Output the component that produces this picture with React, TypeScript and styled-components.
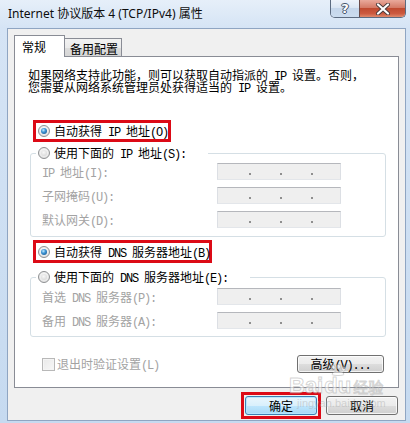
import React from "react";
import styled, { createGlobalStyle } from "styled-components";

const CJK = `"Noto Sans CJK SC", "Noto Sans", sans-serif`;
const RED = "#dc0a16";

const GlobalStyle = createGlobalStyle`
  html, body { margin: 0; padding: 0; }
  body { width: 410px; height: 423px; overflow: hidden; background: #c9dcf1; }
  * { box-sizing: border-box; }
`;

const Window = styled.div`
  position: relative;
  width: 410px;
  height: 423px;
  display: flex;
  flex-direction: column;
  background: linear-gradient(to bottom, #e6eff9 0px, #d5e4f5 28px, #c6daf0 100%);
  font-family: ${CJK};
  font-size: 12px;
  color: #000;
`;

const TitleBar = styled.div`
  height: 28px;
  flex: none;
  display: flex;
  align-items: flex-start;
  padding-left: 8px;
`;

const Title = styled.div`
  padding-top: 6px;
  line-height: 16px;
  font-family: "Noto Sans", "Noto Sans CJK SC", sans-serif;
  font-size: 12px;
  color: #0d0d0d;
`;

const CaptionGroup = styled.div`
  margin-left: auto;
  margin-right: 4px;
  display: flex;
  height: 18px;
  border: 1px solid #5c6b80;
  border-top: none;
  border-radius: 0 0 5px 5px;
  overflow: hidden;
`;

const CaptionButton = styled.div<{ $close?: boolean }>`
  width: ${(p) => (p.$close ? 46 : 28)}px;
  display: flex;
  align-items: center;
  justify-content: center;
  border-left: ${(p) => (p.$close ? "1px solid #6a4a48" : "none")};
  background: ${(p) =>
    p.$close
      ? "linear-gradient(to bottom, #e9a99b 0%, #d47a66 45%, #c04a30 50%, #cc5a3f 80%, #e08a6c 100%)"
      : "linear-gradient(to bottom, #eef3fa 0%, #dbe6f3 45%, #c5d6ea 50%, #cbdcef 100%)"};
  color: #fff;
  font-family: "DejaVu Sans", sans-serif;
  font-weight: bold;
  font-size: 13px;
  line-height: 1;
  text-shadow: 0 0 1px #33435a, 1px 0 0 #4a5a70, -1px 0 0 #4a5a70, 0 1px 0 #4a5a70, 0 -1px 0 #4a5a70;
`;

const Client = styled.div`
  flex: 1;
  margin: 0 4px 2px 7px;
  background: #f0f0f0;
  border: 1px solid #8fa5c2;
  display: flex;
  flex-direction: column;
  padding: 6px 6px 0 6px;
`;

const TabStrip = styled.div`
  height: 21px;
  flex: none;
  display: flex;
  align-items: flex-end;
`;

const Tab = styled.div<{ $active?: boolean }>`
  position: relative;
  z-index: ${(p) => (p.$active ? 1 : 0)};
  height: ${(p) => (p.$active ? 22 : 18)}px;
  width: ${(p) => (p.$active ? 51 : 58)}px;
  margin-left: ${(p) => (p.$active ? 0 : -1)}px;
  margin-bottom: ${(p) => (p.$active ? -1 : 0)}px;
  padding: ${(p) => (p.$active ? "3px 0 0 7px" : "2px 0 0 5px")};
  line-height: 16px;
  font-size: 12px;
  border: 1px solid #898c95;
  border-bottom: none;
  background: ${(p) =>
    p.$active ? "#ffffff" : "linear-gradient(to bottom, #f2f2f2 0%, #ebebeb 50%, #dddddd 51%, #d6d6d6 100%)"};
`;

const Panel = styled.div`
  flex: none;
  height: 332px;
  border: 1px solid #898c95;
  background: #ffffff;
  display: flex;
  flex-direction: column;
`;

const Intro = styled.div`
  margin: 12px 0 0 13px;
  display: flex;
  flex-direction: column;
  font-size: 12px;
`;

const IntroLine = styled.div`
  height: 12px;
  line-height: 12px;
  white-space: nowrap;
`;

const Lat = styled.span`
  font-family: "Liberation Mono", monospace;
  font-size: 12px;
  line-height: 0;
  letter-spacing: -1.2px;
`;

const RedBox = styled.div<{ $w: number; $h: number; $mt: number }>`
  width: ${(p) => p.$w}px;
  height: ${(p) => p.$h}px;
  flex: none;
  margin: ${(p) => p.$mt}px 0 0 18px;
  border: 3px solid ${RED};
  padding-left: 2px;
  display: flex;
  align-items: center;
`;

const RadioRow = styled.div<{ $disabled?: boolean }>`
  display: flex;
  align-items: center;
  gap: 4px;
  height: 16px;
  line-height: 16px;
  white-space: nowrap;
  color: ${(p) => (p.$disabled ? "#a0a0a0" : "#000")};
`;

const Radio = styled.span<{ $checked?: boolean }>`
  position: relative;
  flex: none;
  width: 12px;
  height: 12px;
  border-radius: 50%;
  border: 1px solid #8e9092;
  background: radial-gradient(circle at 50% 40%, #ffffff 0%, #ececec 55%, #d2d2d2 100%);
  &::after {
    content: "";
    position: absolute;
    inset: 2px;
    border-radius: 50%;
    background: ${(p) =>
      p.$checked
        ? "radial-gradient(circle at 40% 35%, #c4ecff 0%, #3d94d4 40%, #0d4a80 100%)"
        : "radial-gradient(circle at 45% 40%, #f8f8f8 0%, #e0e0e0 60%, #cdcdcd 100%)"};
  }
`;

const Group = styled.fieldset<{ $mt: number; $pb: number }>`
  flex: none;
  margin: ${(p) => p.$mt}px 12px 0 15px;
  min-width: 0;
  border: 1px solid #d5dfe5;
  border-radius: 3px;
  padding: 0 0 ${(p) => p.$pb}px 5px;
`;

const Legend = styled.legend<{ $w: number }>`
  width: ${(p) => p.$w}px;
  height: 16px;
  padding: 0 2px;
  background: #ffffff;
`;

const Fields = styled.div<{ $mt: number }>`
  margin-top: ${(p) => p.$mt}px;
  padding-left: 6px;
  display: grid;
  grid-template-columns: 175px 124px;
  grid-auto-rows: 17px;
  row-gap: 7px;
`;

const FieldLabel = styled.div`
  height: 17px;
  line-height: 17px;
  color: #a3a3a3;
  white-space: nowrap;
`;

const IpBox = styled.div`
  height: 17px;
  border: 1px solid;
  border-color: #b5b7bc #dcdfe4 #e3e6ea #dcdfe4;
  background: #efefef;
  display: flex;
  align-items: flex-end;
  gap: 29px;
  padding: 0 0 4px 31px;
`;

const Dot = styled.span`
  width: 2px;
  height: 2px;
  background: #8f8f8f;
`;

const ActionRow = styled.div`
  flex: none;
  margin: 18px 14px 0 27px;
  height: 18px;
  display: flex;
  align-items: center;
  justify-content: space-between;
`;

const CheckLabel = styled.label`
  display: flex;
  align-items: center;
  gap: 2px;
  height: 16px;
  line-height: 16px;
  color: #a3a3a3;
  white-space: nowrap;
`;

const CheckBox = styled.span`
  width: 13px;
  height: 13px;
  border: 1px solid #b8b8b8;
  background: linear-gradient(135deg, #e9e9e9 0%, #f7f7f7 100%);
  box-shadow: inset 0 0 0 1px #f4f4f4;
`;

const Button = styled.button<{ $w: number; $h: number; $primary?: boolean }>`
  width: ${(p) => p.$w}px;
  height: ${(p) => p.$h}px;
  padding: 0;
  font-family: ${CJK};
  font-size: 12px;
  line-height: 16px;
  color: #000;
  border: 1px solid ${(p) => (p.$primary ? "#3c7fb1" : "#707070")};
  border-radius: 3px;
  box-shadow: inset 0 0 0 1px ${(p) => (p.$primary ? "rgba(180,230,255,0.9)" : "rgba(255,255,255,0.75)")};
  background: ${(p) =>
    p.$primary
      ? "linear-gradient(to bottom, #eaf6fd 0%, #d9f0fc 50%, #bee6fd 51%, #a7d9f5 100%)"
      : "linear-gradient(to bottom, #f2f2f2 0%, #ebebeb 50%, #dddddd 51%, #cfcfcf 100%)"};
`;

const Footer = styled.div`
  display: flex;
  justify-content: flex-end;
  align-items: center;
  gap: 5px;
  padding: 4px 1px 0 0;
`;

const OkFrame = styled.div`
  border: 3px solid ${RED};
  padding: 1px;
  display: flex;
`;

const Watermark = styled.div`
  position: absolute;
  left: 289px;
  top: 364px;
  pointer-events: none;
  display: flex;
  flex-direction: column;
  align-items: flex-start;
  color: rgba(255, 255, 255, 0.55);
  -webkit-text-stroke: 1px rgba(160, 160, 160, 0.45);
`;

const MarkRow = styled.div`
  display: flex;
  align-items: flex-end;
`;

const MarkBig = styled.span`
  font-family: "Liberation Sans", sans-serif;
  font-weight: bold;
  font-size: 22px;
  line-height: 20px;
`;

const PawDu = styled.div`
  display: flex;
  flex-direction: column;
  align-items: center;
  margin-left: 1px;
`;

const MarkCn = styled.span`
  font-family: ${CJK};
  font-size: 15px;
  line-height: 18px;
  margin-left: 2px;
`;

const MarkUrl = styled.span`
  margin: 1px 0 0 8px;
  font-family: "Liberation Sans", sans-serif;
  font-size: 11px;
  line-height: 13px;
  -webkit-text-stroke: 0;
  color: rgba(170, 170, 170, 0.45);
`;

const IpField = () => (
  <IpBox>
    <Dot />
    <Dot />
    <Dot />
  </IpBox>
);

export default function App() {
  return (
    <>
      <GlobalStyle />
      <Window>
        <TitleBar>
          <Title>Internet 协议版本 4 (TCP/IPv4) 属性</Title>
          <CaptionGroup>
            <CaptionButton>?</CaptionButton>
            <CaptionButton $close>
              <svg width="16" height="12" viewBox="0 0 16 12">
                <path d="M3 1.5 L13 10.5 M13 1.5 L3 10.5" stroke="#4a3a3a" strokeWidth="4" strokeLinecap="round" />
                <path d="M3 1.5 L13 10.5 M13 1.5 L3 10.5" stroke="#ffffff" strokeWidth="2.2" strokeLinecap="round" />
              </svg>
            </CaptionButton>
          </CaptionGroup>
        </TitleBar>
        <Client>
          <TabStrip>
            <Tab $active>常规</Tab>
            <Tab>备用配置</Tab>
          </TabStrip>
          <Panel>
            <Intro>
              <IntroLine>
                如果网络支持此功能，则可以获取自动指派的<Lat> IP </Lat>设置。否则，
              </IntroLine>
              <IntroLine>
                您需要从网络系统管理员处获得适当的<Lat> IP </Lat>设置。
              </IntroLine>
            </Intro>
            <RedBox $w={138} $h={22} $mt={27}>
              <RadioRow>
                <Radio $checked />
                <span>
                  自动获得<Lat> IP </Lat>地址<Lat>(O)</Lat>
                </span>
              </RadioRow>
            </RedBox>
            <Group $mt={3} $pb={8}>
              <Legend $w={172}>
                <RadioRow>
                  <Radio />
                  <span>
                    使用下面的<Lat> IP </Lat>地址<Lat>(S):</Lat>
                  </span>
                </RadioRow>
              </Legend>
              <Fields $mt={2}>
                <FieldLabel>
                  <Lat>IP </Lat>地址<Lat>(I):</Lat>
                </FieldLabel>
                <IpField />
                <FieldLabel>
                  子网掩码<Lat>(U):</Lat>
                </FieldLabel>
                <IpField />
                <FieldLabel>
                  默认网关<Lat>(D):</Lat>
                </FieldLabel>
                <IpField />
              </Fields>
            </Group>
            <RedBox $w={179} $h={23} $mt={3}>
              <RadioRow>
                <Radio $checked />
                <span>
                  自动获得<Lat> DNS </Lat>服务器地址<Lat>(B)</Lat>
                </span>
              </RadioRow>
            </RedBox>
            <Group $mt={6} $pb={7}>
              <Legend $w={214}>
                <RadioRow>
                  <Radio />
                  <span>
                    使用下面的<Lat> DNS </Lat>服务器地址<Lat>(E):</Lat>
                  </span>
                </RadioRow>
              </Legend>
              <Fields $mt={3}>
                <FieldLabel>
                  首选<Lat> DNS </Lat>服务器<Lat>(P):</Lat>
                </FieldLabel>
                <IpField />
                <FieldLabel>
                  备用<Lat> DNS </Lat>服务器<Lat>(A):</Lat>
                </FieldLabel>
                <IpField />
              </Fields>
            </Group>
            <ActionRow>
              <CheckLabel>
                <CheckBox />
                <span>
                  退出时验证设置<Lat>(L)</Lat>
                </span>
              </CheckLabel>
              <Button $w={87} $h={18}>
                高级<Lat>(V)...</Lat>
              </Button>
            </ActionRow>
          </Panel>
          <Footer>
            <OkFrame>
              <Button $w={72} $h={19} $primary>
                确定
              </Button>
            </OkFrame>
            <Button $w={72} $h={19}>
              取消
            </Button>
          </Footer>
        </Client>
        <Watermark>
          <MarkRow>
            <MarkBig>Bai</MarkBig>
            <PawDu>
              <svg width="20" height="12" viewBox="0 0 20 12">
                <g fill="rgba(255,255,255,0.5)" stroke="rgba(160,160,160,0.45)" strokeWidth="1">
                  <ellipse cx="5" cy="3.5" rx="2" ry="2.5" />
                  <ellipse cx="10.5" cy="2.8" rx="2" ry="2.4" />
                  <ellipse cx="15.5" cy="5" rx="1.8" ry="2.2" />
                  <path d="M4 10 C 7 6, 13 6, 16 10 C 17 12, 3 12, 4 10 Z" />
                </g>
              </svg>
              <MarkBig>du</MarkBig>
            </PawDu>
            <MarkCn>经验</MarkCn>
          </MarkRow>
          <MarkUrl>jingyan.baidu.com</MarkUrl>
        </Watermark>
      </Window>
    </>
  );
}
